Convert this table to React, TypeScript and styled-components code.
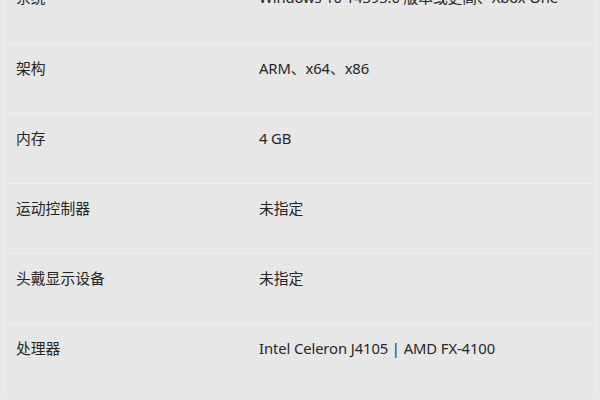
import styled, { createGlobalStyle } from 'styled-components'

const GlobalStyle = createGlobalStyle`
  html, body {
    margin: 0;
    padding: 0;
    background: #e7e7e7;
    overflow: hidden;
  }
  body {
    font-family: 'Noto Sans', 'Noto Sans CJK SC', sans-serif;
    color: #262626;
  }
`

const Page = styled.div`
  width: 600px;
  height: 400px;
  overflow: hidden;
  background: #e7e7e7;
`

const Table = styled.div`
  margin: -27px 3px 0;
  border-left: 1px solid #eeeeee;
  border-right: 1px solid #eeeeee;
`

const Row = styled.div<{ first?: boolean }>`
  display: grid;
  grid-template-columns: 243px 1fr;
  height: 70px;
  box-sizing: border-box;
  padding: 14px 12px 0;
  border-top: ${(p) => (p.first ? 'none' : '1px solid #efefef')};
  font-size: 14.8px;
  line-height: 20px;
`

const Label = styled.div`
  white-space: nowrap;
`

const Value = styled.div`
  white-space: nowrap;
  letter-spacing: -0.1px;
`

const specs = [
  { label: '系统', value: 'Windows 10 14393.0 版本或更高、Xbox One' },
  { label: '架构', value: 'ARM、x64、x86' },
  { label: '内存', value: '4 GB' },
  { label: '运动控制器', value: '未指定' },
  { label: '头戴显示设备', value: '未指定' },
  { label: '处理器', value: 'Intel Celeron J4105 | AMD FX-4100' },
]

const App = () => {
  return (
    <Page>
      <GlobalStyle />
      <Table>
        {specs.map((s, i) => (
          <Row key={s.label} first={i === 0}>
            <Label>{s.label}</Label>
            <Value>{s.value}</Value>
          </Row>
        ))}
      </Table>
    </Page>
  )
}

export default App
